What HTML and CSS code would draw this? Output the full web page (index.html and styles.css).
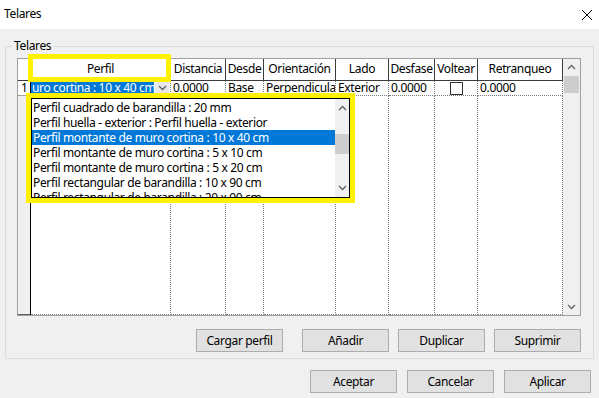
FILE: index.html
```html
<!DOCTYPE html>
<html lang="es">
<head>
<meta charset="utf-8">
<link rel="stylesheet" href="styles.css">
</head>
<body>
<div class="window">
  <div class="titlebar">
    <span class="title">Telares</span>
    <svg class="close" width="12" height="12" viewBox="0 0 12 12"><path d="M1 1 L11 11 M11 1 L1 11" stroke="#000" stroke-width="1" fill="none"/></svg>
  </div>
  <div class="content">
    <fieldset class="group">
      <legend>Telares</legend>
      <div class="gridframe">
        <div class="table">
          <div class="hc rh"></div>
          <div class="hc">Perfil</div>
          <div class="hc">Distancia</div>
          <div class="hc">Desde</div>
          <div class="hc">Orientación</div>
          <div class="hc">Lado</div>
          <div class="hc">Desfase</div>
          <div class="hc">Voltear</div>
          <div class="hc">Retranqueo</div>

          <div class="dc rh num">1</div>
          <div class="dc perfil"><span class="sel">uro cortina : 10 x 40 cm</span><span class="ddbtn"><svg width="9" height="6" viewBox="0 0 9 6"><path d="M1 1 L4.5 4.5 L8 1" stroke="#606060" stroke-width="1.3" fill="none"/></svg></span></div>
          <div class="dc">0.0000</div>
          <div class="dc">Base</div>
          <div class="dc">Perpendicula</div>
          <div class="dc">Exterior</div>
          <div class="dc">0.0000</div>
          <div class="dc center"><span class="check"></span></div>
          <div class="dc">0.0000</div>

          <div class="fc rh"></div>
          <div class="fc"></div>
          <div class="fc"></div>
          <div class="fc"></div>
          <div class="fc"></div>
          <div class="fc"></div>
          <div class="fc"></div>
          <div class="fc"></div>
          <div class="fc"></div>
        </div>
        <div class="vscroll">
          <svg class="arr" width="9" height="6" viewBox="0 0 9 6"><path d="M1 5 L4.5 1.5 L8 5" stroke="#606060" stroke-width="1.3" fill="none"/></svg>
          <div class="thumb"></div>
          <div class="spacer"></div>
          <svg class="arr" width="9" height="6" viewBox="0 0 9 6"><path d="M1 1 L4.5 4.5 L8 1" stroke="#606060" stroke-width="1.3" fill="none"/></svg>
        </div>
      </div>
      <div class="btnrow">
        <button class="btn first">Cargar perfil</button>
        <button class="btn">Añadir</button>
        <button class="btn">Duplicar</button>
        <button class="btn">Suprimir</button>
      </div>
    </fieldset>
    <div class="btnrow bottom">
      <button class="btn">Aceptar</button>
      <button class="btn">Cancelar</button>
      <button class="btn">Aplicar</button>
    </div>
  </div>

  <div class="popup">
    <div class="items">
      <div class="item">Perfil cuadrado de barandilla : 20 mm</div>
      <div class="item">Perfil huella - exterior : Perfil huella - exterior</div>
      <div class="item active">Perfil montante de muro cortina : 10 x 40 cm</div>
      <div class="item">Perfil montante de muro cortina : 5 x 10 cm</div>
      <div class="item">Perfil montante de muro cortina : 5 x 20 cm</div>
      <div class="item">Perfil rectangular de barandilla : 10 x 90 cm</div>
      <div class="item">Perfil rectangular de barandilla : 20 x 90 cm</div>
    </div>
    <div class="pscroll">
      <svg class="arr" width="9" height="6" viewBox="0 0 9 6"><path d="M1 5 L4.5 1.5 L8 5" stroke="#606060" stroke-width="1.3" fill="none"/></svg>
      <div class="pthumb"></div>
      <div class="spacer"></div>
      <svg class="arr" width="9" height="6" viewBox="0 0 9 6"><path d="M1 1 L4.5 4.5 L8 1" stroke="#606060" stroke-width="1.3" fill="none"/></svg>
    </div>
  </div>
  <div class="mark mark-header"></div>
</div>
</body>
</html>
```

FILE: styles.css
```css
* { box-sizing: border-box; }
html, body { margin: 0; padding: 0; }
body {
  width: 599px;
  height: 398px;
  overflow: hidden;
  background: #f0f0f0;
  font-family: "Noto Sans", "Open Sans", sans-serif;
  font-size: 12px;
  letter-spacing: -0.35px;
  color: #000;
}
.window { position: relative; width: 599px; height: 398px; }
.titlebar {
  height: 29px;
  background: #fff;
  display: flex;
  align-items: center;
  justify-content: space-between;
  padding: 0 6px 2px 4px;
}
.title { font-size: 12px; }
.close { margin-top: 2px; }
.content { padding: 0 8px 0 5px; }
.group {
  margin: 10px 0 0 0;
  width: 589px;
  border: 1px solid #dcdcdc;
  padding: 5px 12px 6px 6px;
  min-width: 0;
}
.group legend {
  padding: 0 2px;
  line-height: 14px;
  font-size: 12px;
}
.gridframe {
  margin-left: 5px;
  width: 564px;
  height: 258px;
  border: 1px solid #a0a0a0;
  display: flex;
  background: #fff;
}
.table {
  display: grid;
  grid-template-columns: 13px 140px 55px 38px 72px 53px 46px 43px 85px;
  grid-template-rows: 22px 15px 1fr;
  width: 545px;
}
.hc {
  border-right: 1px solid #3c3c3c;
  border-bottom: 1px solid #3c3c3c;
  background: #fff;
  text-align: center;
  line-height: 20px;
  white-space: nowrap;
  overflow: hidden;
}
.dc {
  border-right: 1px dotted #7a7a7a;
  border-bottom: 1px dotted #7a7a7a;
  line-height: 14px;
  padding-left: 2px;
  white-space: nowrap;
  overflow: hidden;
}
.dc.rh { border-right: 1px solid #000; border-bottom: 1px solid #a0a0a0; padding-left: 3px; }
.dc.perfil { padding: 0; display: flex; }
.dc.center { display: flex; justify-content: center; align-items: center; padding: 0; }
.sel {
  background: #0078d7;
  color: #fff;
  padding-left: 1px;
  width: 123px;
  overflow: hidden;
  white-space: nowrap;
}
.ddbtn {
  width: 14px;
  margin-left: 1px;
  background: #e8e8e8;
  display: flex;
  align-items: center;
  justify-content: center;
}
.check {
  width: 13px;
  height: 13px;
  border: 1px solid #333;
  background: #fff;
}
.fc {
  border-right: 1px dotted #7a7a7a;
  border-bottom: 1px dotted #7a7a7a;
}
.fc.rh { background: #f0f0f0; border-right: 1px solid #000; border-bottom: 1px solid #606060; }
.vscroll {
  width: 17px;
  background: #f0f0f0;
  display: flex;
  flex-direction: column;
  align-items: center;
}
.vscroll .arr { margin-top: 5px; flex: none; }
.vscroll .arr:last-child { margin: 0 0 5px 0; }
.thumb {
  margin-top: 6px;
  width: 15px;
  height: 17px;
  background: #cdcdcd;
}
.spacer { flex: 1; }
.btnrow {
  display: flex;
  justify-content: flex-end;
  gap: 9px;
  margin-top: 13px;
}
.btn {
  width: 87px;
  height: 23px;
  border: 1px solid #adadad;
  background: #e1e1e1;
  font-family: inherit;
  font-size: 12px;
  letter-spacing: -0.35px;
  padding: 0;
  color: #000;
}
.btn.first { margin-right: 10px; }
.btnrow.bottom { margin-top: 11px; gap: 10px; }

.popup {
  position: absolute;
  left: 31px;
  top: 98px;
  width: 319px;
  height: 100px;
  border: 1px solid #000;
  background: #fff;
  outline: 5px solid #fff200;
  display: flex;
}
.items { flex: 1; overflow: hidden; padding-top: 1px; }
.item {
  height: 15px;
  line-height: 15px;
  padding-left: 1px;
  white-space: nowrap;
}
.item.active { background: #0078d7; color: #fff; }
.pscroll {
  width: 14px;
  background: #f0f0f0;
  display: flex;
  flex-direction: column;
  align-items: center;
}
.pscroll .arr { margin-top: 6px; flex: none; }
.pscroll .arr:last-child { margin: 0 0 6px 0; }
.pthumb { margin-top: 23px; width: 14px; height: 20px; background: #cdcdcd; }
.mark {
  position: absolute;
  border: 5px solid #fff200;
}
.mark-header { left: 28px; top: 54px; width: 143px; height: 28px; }
```
